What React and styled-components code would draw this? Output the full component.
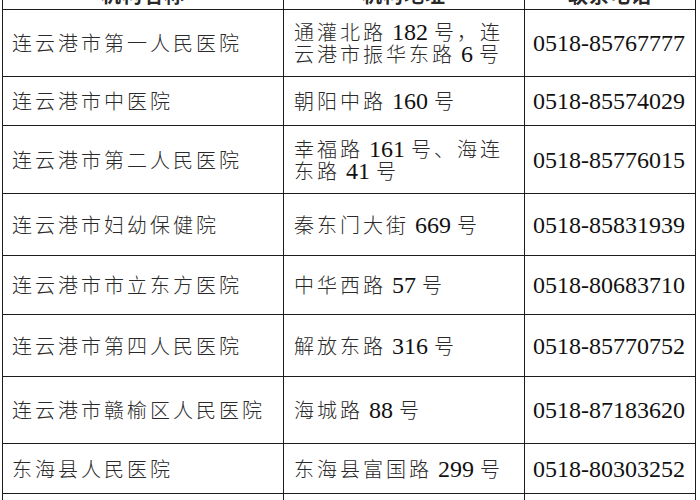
import React from "react";
import styled, { createGlobalStyle } from "styled-components";

const Global = createGlobalStyle`
  html, body { margin: 0; padding: 0; background: #fff; overflow: hidden; }
  body { width: 700px; height: 500px; }
`;

const Page = styled.div`
  width: 700px;
  height: 500px;
  overflow: hidden;
  padding-left: 2px;
  box-sizing: border-box;
`;

const Table = styled.div`
  margin-top: -30px;
  width: 694px;
  border-left: 1px solid #1c1c1c;
  box-sizing: border-box;
`;

const Row = styled.div`
  display: grid;
  grid-template-columns: 281px 241px 171px;
  height: ${(p) => p.$h}px;
  border-bottom: 1px solid #1c1c1c;
  box-sizing: border-box;
`;

const Cell = styled.div`
  display: flex;
  flex-direction: column;
  justify-content: ${(p) => (p.$head ? "flex-end" : "center")};
  align-items: ${(p) => (p.$head ? "center" : "flex-start")};
  padding: ${(p) => (p.$head ? "0 0 3px 0" : `0 0 0 ${p.$pl}px`)};
  border-right: 1px solid #1c1c1c;
  box-sizing: border-box;
  overflow: hidden;
  color: #1a1a1a;
`;

const Line = styled.div`
  white-space: nowrap;
  line-height: 22px;
  height: 22px;
  display: flex;
  align-items: baseline;
`;

const Han = styled.span`
  font-family: "Noto Sans CJK SC", sans-serif;
  font-size: 20px;
  font-weight: ${(p) => (p.$bold ? 700 : 300)};
  letter-spacing: ${(p) => (p.$bold ? 1 : 3)}px;
  color: #2a2a2a;
`;

const Latin = styled.span`
  font-family: "Liberation Serif", "Times New Roman", serif;
  font-size: 24px;
  white-space: pre;
  color: #111;
`;

const CJK = /([\u3000-\u303f\u4e00-\u9fff\uff00-\uffef]+)/;

function Text({ children, bold }) {
  const parts = children.split(CJK).filter((s) => s !== "");
  return parts.map((s, i) =>
    CJK.test(s) ? (
      <Han key={i} $bold={bold}>
        {s}
      </Han>
    ) : (
      <Latin key={i}>{s}</Latin>
    )
  );
}

const rows = [
  { h: 67, name: "连云港市第一人民医院", addr: ["通灌北路 182 号，连", "云港市振华东路 6 号"], tel: "0518-85767777" },
  { h: 49, name: "连云港市中医院", addr: ["朝阳中路 160 号"], tel: "0518-85574029" },
  { h: 68, name: "连云港市第二人民医院", addr: ["幸福路 161 号、海连", "东路 41 号"], tel: "0518-85776015" },
  { h: 62, name: "连云港市妇幼保健院", addr: ["秦东门大街 669 号"], tel: "0518-85831939" },
  { h: 59, name: "连云港市市立东方医院", addr: ["中华西路 57 号"], tel: "0518-80683710" },
  { h: 62, name: "连云港市第四人民医院", addr: ["解放东路 316 号"], tel: "0518-85770752" },
  { h: 67, name: "连云港市赣榆区人民医院", addr: ["海城路 88 号"], tel: "0518-87183620" },
  { h: 50, name: "东海县人民医院", addr: ["东海县富国路 299 号"], tel: "0518-80303252" },
  { h: 60, name: "", addr: [""], tel: "" },
];

export default function App() {
  return (
    <Page>
      <Global />
      <Table>
        <Row $h={40}>
          <Cell $head>
            <Line><Text bold>机构名称</Text></Line>
          </Cell>
          <Cell $head>
            <Line><Text bold>机构地址</Text></Line>
          </Cell>
          <Cell $head>
            <Line><Text bold>联系电话</Text></Line>
          </Cell>
        </Row>
        {rows.map((r, i) => (
          <Row key={i} $h={r.h}>
            <Cell $pl={9}>
              <Line><Text>{r.name}</Text></Line>
            </Cell>
            <Cell $pl={10}>
              {r.addr.map((l, j) => (
                <Line key={j}><Text>{l}</Text></Line>
              ))}
            </Cell>
            <Cell $pl={8}>
              <Line><Text>{r.tel}</Text></Line>
            </Cell>
          </Row>
        ))}
      </Table>
    </Page>
  );
}
